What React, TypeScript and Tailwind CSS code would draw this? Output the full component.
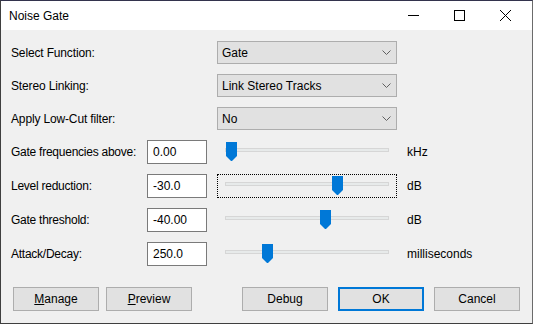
import React from "react";

function Chevron() {
  return (
    <svg width="9" height="5" viewBox="0 0 9 5" className="shrink-0">
      <polyline points="0.5,0.5 4.5,4.5 8.5,0.5" fill="none" stroke="#606060" strokeWidth="1" />
    </svg>
  );
}

function Dropdown({ label, value }: { label: string; value: string }) {
  return (
    <div className="flex items-center h-[23px]">
      <div className="w-[206px] tracking-[-0.15px]">{label}</div>
      <div className="w-[180px] h-[23px] bg-[#e1e1e1] border border-[#adadad] flex items-center justify-between pl-[4px] pr-[5px]">
        <span>{value}</span>
        <Chevron />
      </div>
    </div>
  );
}

function Thumb() {
  return (
    <svg width="11" height="20" viewBox="0 0 11 20">
      <polygon points="0,0 11,0 11,14 6,19 5,19 0,14" fill="#0078d7" />
    </svg>
  );
}

function SliderRow({
  label,
  value,
  unit,
  pos,
  focused,
}: {
  label: string;
  value: string;
  unit: string;
  pos: number;
  focused?: boolean;
}) {
  return (
    <div className="flex items-center h-[24px]">
      <div className="w-[136px] tracking-[-0.25px]">{label}</div>
      <div className="w-[60px] h-[24px] bg-white border border-[#7a7a7a] flex items-center pl-[5px]">{value}</div>
      <div
        className={
          "ml-[10px] w-[180px] h-[24px] relative " +
          (focused ? "border border-dotted border-black" : "")
        }
      >
        <div
          className={
            "absolute h-[4px] bg-[#e7eaea] border border-[#d6d6d6] " +
            (focused ? "top-[7px] left-[7px] right-[7px]" : "top-[8px] left-[8px] right-[8px]")
          }
        />
        <div className={"absolute " + (focused ? "top-[1px]" : "top-[2px]")} style={{ left: focused ? pos - 1 : pos }}>
          <Thumb />
        </div>
      </div>
      <div className="ml-[10px]">{unit}</div>
    </div>
  );
}

function Button({ children, primary }: { children: React.ReactNode; primary?: boolean }) {
  return (
    <div
      className={
        "w-[86px] h-[24px] bg-[#e1e1e1] flex items-center justify-center " +
        (primary ? "border-2 border-[#0078d7]" : "border border-[#adadad]")
      }
    >
      {children}
    </div>
  );
}

export default function App() {
  return (
    <div className="w-[533px] h-[324px] bg-[#f0f0f0] border-l border-r border-b border-t border-l-[#3f3f3f] border-r-[#6b6b6b] border-b-[#3f3f3f] border-t-[#33334d] flex flex-col text-[12px] text-black font-['Liberation_Sans',Arial,sans-serif] leading-none overflow-hidden">
      <div className="h-[29px] bg-white flex items-center shrink-0">
        <div className="pl-[8px] flex-1">Noise Gate</div>
        <div className="w-[46px] h-[29px] flex items-center justify-center">
          <svg width="11" height="11" viewBox="0 0 11 11">
            <line x1="0" y1="5.5" x2="11" y2="5.5" stroke="#000" strokeWidth="1" />
          </svg>
        </div>
        <div className="w-[46px] h-[29px] flex items-center justify-center">
          <svg width="11" height="11" viewBox="0 0 11 11">
            <rect x="0.5" y="0.5" width="10" height="10" fill="none" stroke="#000" strokeWidth="1" />
          </svg>
        </div>
        <div className="w-[46px] h-[29px] flex items-center justify-center mr-[4px]">
          <svg width="11" height="11" viewBox="0 0 11 11">
            <line x1="0" y1="0" x2="11" y2="11" stroke="#000" strokeWidth="1" />
            <line x1="11" y1="0" x2="0" y2="11" stroke="#000" strokeWidth="1" />
          </svg>
        </div>
      </div>
      <div className="flex flex-col pl-[10px] pt-[11px] gap-[10px]">
        <Dropdown label="Select Function:" value="Gate" />
        <Dropdown label="Stereo Linking:" value="Link Stereo Tracks" />
        <Dropdown label="Apply Low-Cut filter:" value="No" />
        <SliderRow label="Gate frequencies above:" value="0.00" unit="kHz" pos={9} />
        <SliderRow label="Level reduction:" value="-30.0" unit="dB" pos={115} focused />
        <SliderRow label="Gate threshold:" value="-40.00" unit="dB" pos={103} />
        <SliderRow label="Attack/Decay:" value="250.0" unit="milliseconds" pos={45} />
      </div>
      <div className="flex items-center mt-[21px] pl-[12px]">
        <Button>
          <span>
            <u>M</u>anage
          </span>
        </Button>
        <div className="ml-[7px]">
          <Button>
            <span>
              <u>P</u>review
            </span>
          </Button>
        </div>
        <div className="ml-[50px]">
          <Button>
            <span>
              Debu<u>g</u>
            </span>
          </Button>
        </div>
        <div className="ml-[10px]">
          <Button primary>OK</Button>
        </div>
        <div className="ml-[10px]">
          <Button>Cancel</Button>
        </div>
      </div>
    </div>
  );
}
